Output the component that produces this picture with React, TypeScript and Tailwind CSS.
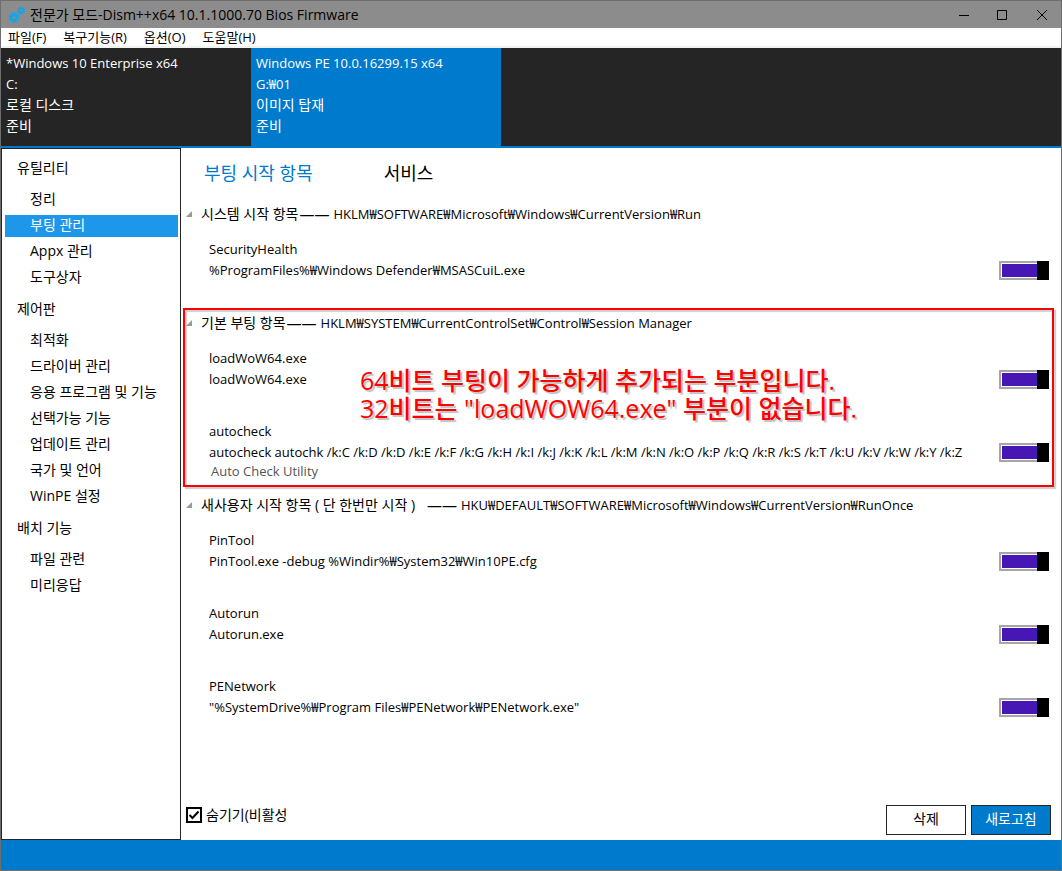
import { useState } from "react";

const images = [
  { name: "*Windows 10 Enterprise x64", path: "C:", kind: "로컬 디스크", state: "준비" },
  { name: "Windows PE 10.0.16299.15 x64", path: "G:₩01", kind: "이미지 탑재", state: "준비" },
];

const navGroups = [
  { title: "유틸리티", items: ["정리", "부팅 관리", "Appx 관리", "도구상자"] },
  {
    title: "제어판",
    items: ["최적화", "드라이버 관리", "응용 프로그램 및 기능", "선택가능 기능", "업데이트 관리", "국가 및 언어", "WinPE 설정"],
  },
  { title: "배치 기능", items: ["파일 관련", "미리응답"] },
];

type Entry = { name: string; command: string; note?: string };
type Group = { title: string; path: string; marked?: boolean; entries: Entry[] };

const groups: Group[] = [
  {
    title: "시스템 시작 항목",
    path: "HKLM₩SOFTWARE₩Microsoft₩Windows₩CurrentVersion₩Run",
    entries: [{ name: "SecurityHealth", command: "%ProgramFiles%₩Windows Defender₩MSASCuiL.exe" }],
  },
  {
    title: "기본 부팅 항목",
    path: "HKLM₩SYSTEM₩CurrentControlSet₩Control₩Session Manager",
    marked: true,
    entries: [
      { name: "loadWoW64.exe", command: "loadWoW64.exe" },
      {
        name: "autocheck",
        command:
          "autocheck autochk /k:C /k:D /k:D /k:E /k:F /k:G /k:H /k:I /k:J /k:K /k:L /k:M /k:N /k:O /k:P /k:Q /k:R /k:S /k:T /k:U /k:V /k:W /k:Y /k:Z",
        note: "Auto Check Utility",
      },
    ],
  },
  {
    title: "새사용자 시작 항목 ( 단 한번만 시작 )   ",
    path: "HKU₩DEFAULT₩SOFTWARE₩Microsoft₩Windows₩CurrentVersion₩RunOnce",
    entries: [
      { name: "PinTool", command: "PinTool.exe -debug %Windir%₩System32₩Win10PE.cfg" },
      { name: "Autorun", command: "Autorun.exe" },
      { name: "PENetwork", command: '"%SystemDrive%₩Program Files₩PENetwork₩PENetwork.exe"' },
    ],
  },
];

function Gears() {
  return (
    <svg viewBox="0 0 18 18" className="h-[18px] w-[18px]" fill="none" stroke="#12a5ea" aria-hidden="true">
      <circle cx="6" cy="11.5" r="2.8" strokeWidth="2.4" />
      <circle cx="6" cy="11.5" r="4.5" strokeWidth="2" strokeDasharray="2 1.534" />
      <circle cx="13" cy="4.5" r="2" strokeWidth="1.7" />
      <circle cx="13" cy="4.5" r="3.2" strokeWidth="1.6" strokeDasharray="1.5 1.013" />
    </svg>
  );
}

function TitleBar() {
  return (
    <header className="flex h-[27px] items-center bg-[#8c8c8c] pl-[7px] text-black">
      <Gears />
      <h1 className="ml-1 flex-1 truncate text-[14px] leading-5">전문가 모드-Dism++x64 10.1.1000.70 Bios Firmware</h1>
      <div className="flex pr-1">
        <button aria-label="최소화" className="grid h-[26px] w-[30px] place-items-center">
          <svg width="10" height="10" viewBox="0 0 10 10" stroke="black"><path d="M0 5.5H10" /></svg>
        </button>
        <button aria-label="최대화" className="ml-2 grid h-[26px] w-[30px] place-items-center">
          <svg width="10" height="10" viewBox="0 0 10 10" stroke="black" fill="none"><path d="M.5 .5H9.5V9.5H.5Z" /></svg>
        </button>
        <button aria-label="닫기" className="ml-[10px] grid h-[26px] w-[30px] place-items-center">
          <svg width="10" height="10" viewBox="0 0 10 10" stroke="black"><path d="M0 0L10 10M10 0L0 10" /></svg>
        </button>
      </div>
    </header>
  );
}

function Toggle({ label }: { label: string }) {
  const [on, setOn] = useState(true);
  return (
    <input
      type="checkbox"
      role="switch"
      aria-label={label}
      checked={on}
      onChange={() => setOn(!on)}
      className="relative h-[19px] w-[50px] shrink-0 appearance-none border-2 border-[#a6a6a6] bg-white bg-clip-content p-px after:absolute after:-inset-y-[2px] after:-left-[2px] after:w-3 after:bg-black checked:bg-[#4617b4] checked:after:-right-[2px] checked:after:left-auto"
    />
  );
}

function StartupGroup({ group }: { group: Group }) {
  return (
    <section className="relative pr-3 pl-[5px]">
      <h2 className="mb-[14px] flex h-[22px] items-center text-[13px] leading-[22px] whitespace-pre">
        <svg viewBox="0 0 6 6" className="mr-[9px] h-[6px] w-[6px]" fill="#999999" aria-hidden="true">
          <path d="M6 0V6H0Z" />
        </svg>
        <span className="text-[14px]">{group.title}</span>
        <span className="mr-1 ml-px text-[15px]">——</span>
        <span>{group.path}</span>
      </h2>
      <ul>
        {group.entries.map((entry) => (
          <li key={entry.name} className="flex h-[73px] pl-[23px] text-[13px] leading-[21px]">
            <div className="min-w-0 flex-1">
              <p>{entry.name}</p>
              <p className="mr-[7px] overflow-hidden whitespace-nowrap">{entry.command}</p>
              {entry.note && <p className="pl-[2px] leading-4 text-[#555555]">{entry.note}</p>}
            </div>
            <div className="pt-[22px] leading-[0]">
              <Toggle label={entry.name} />
            </div>
          </li>
        ))}
      </ul>
      {group.marked && (
        <div className="pointer-events-none absolute -top-1 right-[7px] bottom-[7px] left-[2px] border-2 border-[#ff0000] shadow-[2px_2px_1px_#00000030,inset_2px_2px_1px_#00000030]">
          <p className="pt-14 pl-[175px] text-[25px] leading-7 font-medium whitespace-pre text-[#ff0000] [text-shadow:2px_2px_1px_#00000040]">
            {'64비트 부팅이 가능하게 추가되는 부분입니다.\n32비트는 "loadWOW64.exe" 부분이 없습니다.'}
          </p>
        </div>
      )}
    </section>
  );
}

export default function App() {
  const [image, setImage] = useState(1);
  const [page, setPage] = useState("부팅 관리");
  const [tab, setTab] = useState("부팅 시작 항목");
  const [hide, setHide] = useState(true);

  return (
    <div className="flex min-h-screen flex-col border border-[#6e6e6e] bg-white font-['Open_Sans','Noto_Sans_CJK_KR',sans-serif] text-[13px] text-black">
      <TitleBar />
      <nav className="flex h-5 gap-[17px] border-b-2 border-[#f0f3f0] pl-[7px] text-[13px] leading-[18px]">
        {["파일(F)", "복구기능(R)", "옵션(O)", "도움말(H)"].map((item) => (
          <button key={item}>{item}</button>
        ))}
      </nav>
      <div className="flex h-[100px] border-b-2 border-[#007acc] bg-[#252526]">
        {images.map((item, index) => (
          <button
            key={item.name}
            onClick={() => setImage(index)}
            className={`flex w-[250px] flex-col items-start pt-[5px] pl-[5px] leading-[21px] text-white ${image === index ? "bg-[#007acc]" : ""}`}
          >
            <span>{item.name}</span>
            <span>{item.path}</span>
            <span className="text-[14px] leading-5">{item.kind}</span>
            <span className="text-[14px] leading-[21px]">{item.state}</span>
          </button>
        ))}
      </div>
      <div className="flex flex-1">
        <nav className="flex w-[180px] shrink-0 flex-col gap-[9px] border border-[#252526] pt-2 pr-[2px] pl-[3px] text-[14px] leading-[22px]">
          {navGroups.map((group) => (
            <section key={group.title}>
              <h2 className="pl-3">{group.title}</h2>
              <ul className="mt-[10px] flex flex-col gap-1">
                {group.items.map((item) => (
                  <li key={item}>
                    <button
                      onClick={() => setPage(item)}
                      className={`block h-[22px] w-full pb-[2px] pl-[25px] text-left leading-[20px] whitespace-nowrap ${page === item ? "bg-[#1e97ea] text-white" : ""}`}
                    >
                      {item}
                    </button>
                  </li>
                ))}
              </ul>
            </section>
          ))}
        </nav>
        <main className="flex min-w-0 flex-1 flex-col">
          <div className="flex h-[55px] gap-[71px] pt-3 pl-[23px] text-[18px] leading-[26px]">
            {["부팅 시작 항목", "서비스"].map((item) => (
              <button key={item} onClick={() => setTab(item)} className={`h-[26px] ${tab === item ? "text-[#007acc]" : ""}`}>
                {item}
              </button>
            ))}
          </div>
          <div className="flex-1">
            {groups.map((group) => (
              <StartupGroup key={group.title} group={group} />
            ))}
          </div>
          <footer className="flex items-end pr-[10px] pb-[5px] pl-[5px]">
            <label className="mb-[10px] flex items-center text-[14px] leading-5">
              <span className="mr-1 grid h-4 w-4 place-items-center">
                <input
                  type="checkbox"
                  checked={hide}
                  onChange={() => setHide(!hide)}
                  className="peer col-start-1 row-start-1 h-4 w-4 appearance-none border-2 border-black bg-white"
                />
                <svg viewBox="0 0 16 16" className="pointer-events-none col-start-1 row-start-1 hidden h-4 w-4 peer-checked:block" fill="none" stroke="black" strokeWidth="2">
                  <path d="M3.5 8L6.5 11L12.5 4.5" />
                </svg>
              </span>
              숨기기(비활성
            </label>
            <button className="ml-auto h-[30px] w-20 border border-[#252526] pb-[2px] text-[14px] leading-5">삭제</button>
            <button className="ml-[5px] h-[30px] w-20 border border-[#252526] bg-[#007acc] pb-[2px] text-[14px] leading-5 text-white">새로고침</button>
          </footer>
        </main>
      </div>
      <div className="h-[30px] bg-[#007acc]" />
    </div>
  );
}
